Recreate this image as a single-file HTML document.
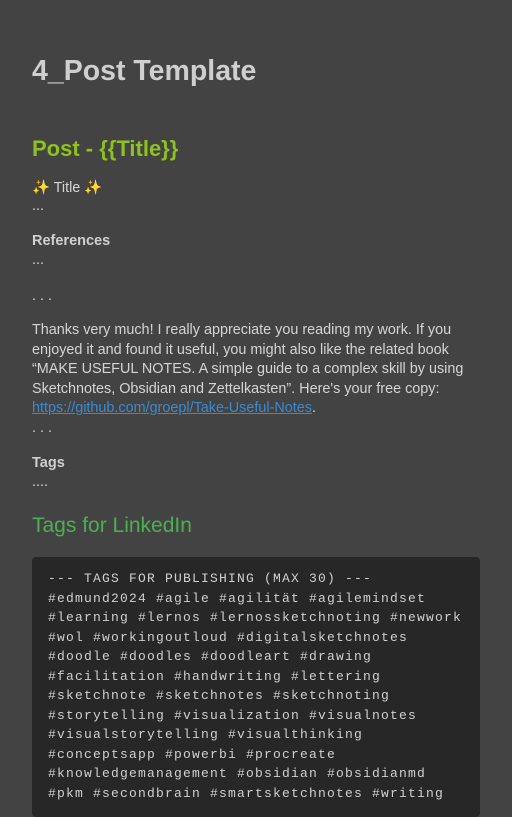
<!DOCTYPE html>
<html><head><meta charset="utf-8"><style>
body{margin:0;width:512px;height:800px;background:#434343;overflow:hidden;font-family:"Liberation Sans",sans-serif;color:#d4d4d4;position:relative}
.a{position:absolute;left:32px;white-space:nowrap}
.t{font-size:14.4px}
.b{font-weight:bold;font-size:14.5px;color:#d0d0d0}
pre{position:absolute;left:32px;top:557px;width:448px;height:260px;margin:0;background:#272727;border-radius:4px;box-sizing:border-box;padding:12px 16px;font-family:"Liberation Mono",monospace;font-size:13px;letter-spacing:1.2px;line-height:19.5px;color:#d0d0d0;font-weight:normal}
a{color:#3b8ad0;text-decoration:underline}
</style></head><body>
<div class="a" style="top:55px;font-size:28.5px;font-weight:bold;color:#cfcfcf">4_Post Template</div>
<div class="a" style="top:136px;font-size:22px;font-weight:bold;color:#8dc21f">Post - {{Title}}</div>
<div class="a t" style="top:179px"><span style="color:#f5c030">✨</span> Title <span style="color:#f5c030">✨</span></div>
<div class="a t" style="top:198px">...</div>
<div class="a b" style="top:233px">References</div>
<div class="a t" style="top:252px">...</div>
<div class="a t" style="top:288px">. . .</div>
<div class="a t" style="top:321px;line-height:19.6px">Thanks very much! I really appreciate you reading my work. If you<br>enjoyed it and found it useful, you might also like the related book<br>“MAKE USEFUL NOTES. A simple guide to a complex skill by using<br>Sketchnotes, Obsidian and Zettelkasten”. Here's your free copy:<br><a>https://github.com/groepl/Take-Useful-Notes</a>.</div>
<div class="a t" style="top:420px">. . .</div>
<div class="a b" style="top:455px">Tags</div>
<div class="a t" style="top:474px">....</div>
<div class="a" style="top:514px;font-size:21px;color:#4caf50">Tags for LinkedIn</div>
<pre>--- TAGS FOR PUBLISHING (MAX 30) ---
#edmund2024 #agile #agilität #agilemindset
#learning #lernos #lernossketchnoting #newwork
#wol #workingoutloud #digitalsketchnotes
#doodle #doodles #doodleart #drawing
#facilitation #handwriting #lettering
#sketchnote #sketchnotes #sketchnoting
#storytelling #visualization #visualnotes
#visualstorytelling #visualthinking
#conceptsapp #powerbi #procreate
#knowledgemanagement #obsidian #obsidianmd
#pkm #secondbrain #smartsketchnotes #writing</pre>
</body></html>
